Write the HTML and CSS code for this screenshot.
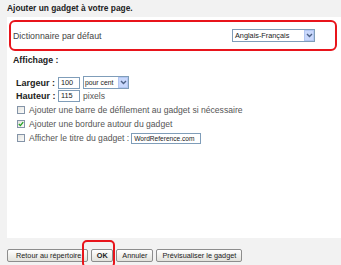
FILE: index.html
```html
<!DOCTYPE html>
<html lang="fr">
<head>
  <meta charset="UTF-8">
  <meta name="viewport" content="width=device-width, initial-scale=1.0">
  <title>Ajouter un gadget</title>
  <link rel="stylesheet" href="styles.css">
</head>
<body>
  <div class="title">Ajouter un gadget à votre page.</div>

  <div class="panel">
    <div class="dict">
      <span>Dictionnaire par défaut</span>
      <div class="select select-dict">
        <span class="select-text">Anglais-Français</span>
        <span class="select-arrow">
          <svg width="7" height="5" viewBox="0 0 7 5"><path d="M1 1 L3.5 3.5 L6 1" fill="none" stroke="#4d6185" stroke-width="1.4"/></svg>
        </span>
      </div>
    </div>

    <div class="section">Affichage :</div>

    <div class="field">
      <span class="label">Largeur :</span>
      <span class="input input-small">100</span>
      <div class="select select-unit">
        <span class="select-text">pour cent</span>
        <span class="select-arrow">
          <svg width="7" height="5" viewBox="0 0 7 5"><path d="M1 1 L3.5 3.5 L6 1" fill="none" stroke="#4d6185" stroke-width="1.4"/></svg>
        </span>
      </div>
    </div>
    <div class="field">
      <span class="label">Hauteur :</span>
      <span class="input input-small">115</span>
      <span class="unit">pixels</span>
    </div>

    <div class="check-row">
      <span class="checkbox"></span>
      <span>Ajouter une barre de défilement au gadget si nécessaire</span>
    </div>
    <div class="check-row">
      <span class="checkbox checked">
        <svg width="6" height="6" viewBox="0 0 6 6"><path d="M0.8 3 L2.4 4.6 L5.2 1.2" fill="none" stroke="#21a121" stroke-width="1.3"/></svg>
      </span>
      <span>Ajouter une bordure autour du gadget</span>
    </div>
    <div class="check-row">
      <span class="checkbox"></span>
      <span>Afficher le titre du gadget :</span>
      <span class="input input-title">WordReference.com</span>
    </div>
  </div>

  <div class="buttons">
    <button class="btn btn-back">Retour au répertoire</button>
    <span class="btn-wrap">
      <button class="btn btn-ok">OK</button>
      <span class="highlight"></span>
    </span>
    <button class="btn">Annuler</button>
    <button class="btn">Prévisualiser le gadget</button>
  </div>
</body>
</html>
```

FILE: styles.css
```css
body {
    font-family: "Liberation Sans", Arial, sans-serif;
    background-color: #f2f2f2;
    color: #333;
    margin: 0;
    height: 265px;
    overflow: hidden;
}

.title {
    font-weight: bold;
    font-size: 8.4px;
    line-height: 9px;
    height: 13px;
    padding: 4px 7px 0;
    color: #222;
}

.panel {
    margin-left: 7px;
    height: 221px;
    background-color: white;
    padding: 3px 4px 0 2px;
    box-sizing: border-box;
}

.dict {
    height: 31px;
    box-sizing: border-box;
    border: 2px solid #e8141b;
    border-radius: 6px;
    display: flex;
    align-items: center;
    justify-content: space-between;
    padding: 0 20px 0 2px;
    font-size: 8.8px;
    color: #444;
}

.select {
    display: flex;
    align-items: center;
    height: 13px;
    box-sizing: border-box;
    border: 1px solid #7f9db9;
    background-color: white;
    font-size: 7.3px;
    color: #222;
}

.select-text {
    flex: 1;
    padding-left: 2px;
    white-space: nowrap;
}

.select-arrow {
    width: 10px;
    height: 11px;
    box-sizing: border-box;
    background-color: #c9d8fc;
    border: 1px solid #b3c7f2;
    display: flex;
    align-items: center;
    justify-content: center;
}

.select-dict {
    width: 83px;
}

.select-unit {
    width: 46px;
    margin-left: 3px;
    font-size: 6.8px;
}

.select-unit .select-text {
    padding-left: 1px;
}

.section {
    font-weight: bold;
    font-size: 8.8px;
    line-height: 11px;
    margin-top: 4px;
    padding-left: 4px;
    color: #222;
}

.field {
    display: flex;
    align-items: center;
    height: 13px;
    padding-left: 7px;
    font-size: 9px;
}

.section + .field {
    margin-top: 10px;
}

.label {
    font-weight: bold;
    width: 42px;
    color: #222;
}

.input {
    display: inline-flex;
    align-items: center;
    box-sizing: border-box;
    border: 1px solid #7f9db9;
    background-color: white;
    font-size: 7.3px;
    color: #222;
    padding-left: 2px;
}

.input-small {
    width: 22px;
    height: 12px;
}

.unit {
    margin-left: 3px;
    font-size: 8.6px;
    color: #555;
}

.check-row {
    display: flex;
    align-items: center;
    height: 14px;
    padding-left: 8px;
    font-size: 8.6px;
    color: #555;
}

.field + .check-row {
    margin-top: 1px;
}

.checkbox {
    width: 8px;
    height: 8px;
    box-sizing: border-box;
    border: 1px solid #8494a8;
    background: linear-gradient(135deg, #e4e4e0, #fbfbfa);
    margin-right: 4px;
    display: flex;
    align-items: center;
    justify-content: center;
}

.input-title {
    width: 70px;
    height: 11px;
    margin-left: 2px;
    font-size: 6.6px;
}

.buttons {
    display: flex;
    align-items: center;
    padding: 11px 0 0 7px;
}

.btn {
    font-family: "Liberation Sans", Arial, sans-serif;
    font-size: 7.3px;
    color: #222;
    height: 13px;
    padding: 0 5px;
    border: 1px solid #8d8d8d;
    border-radius: 2px;
    background: linear-gradient(#ffffff, #e2e2dc);
    margin-right: 3px;
    cursor: pointer;
}

.btn-back {
    padding: 0 6px 0 8px;
}

.btn-wrap {
    position: relative;
    display: flex;
}

.btn-ok {
    font-weight: bold;
    width: 22px;
    padding: 0;
}

.highlight {
    position: absolute;
    left: -9px;
    top: -9px;
    width: 33px;
    height: 28px;
    box-sizing: border-box;
    border: 2px solid #e8141b;
    border-radius: 5px;
}
```
